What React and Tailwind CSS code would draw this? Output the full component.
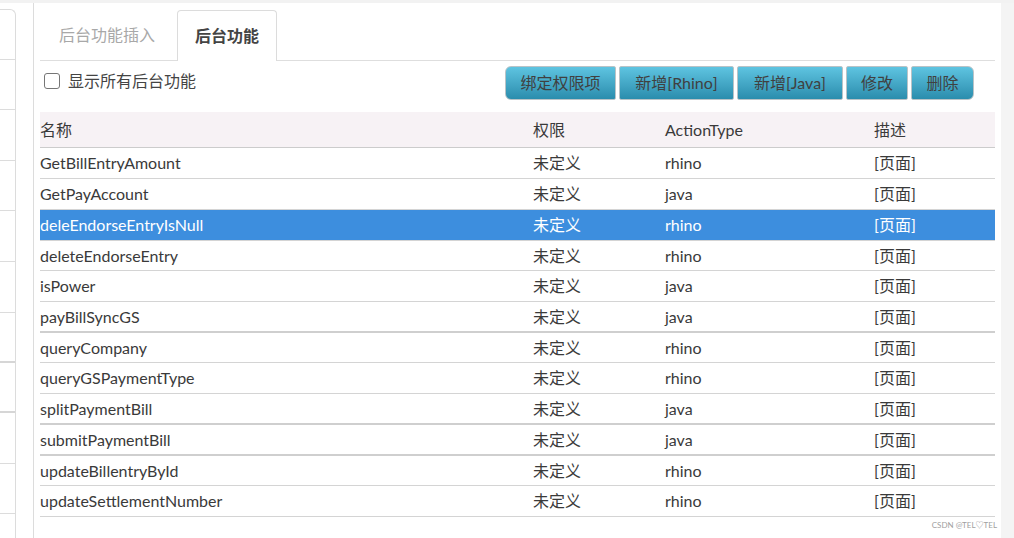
import React from "react";

const rows = [
  ["GetBillEntryAmount", "rhino", "h-[31px]", "border-b border-[#d4d4d4]"],
  ["GetPayAccount", "java", "h-[31px]", "border-b border-[#d4d4d4]"],
  ["deleEndorseEntryIsNull", "rhino", "h-[31px]", "border-b border-[#d4d4d4]", true],
  ["deleteEndorseEntry", "rhino", "h-[30px]", "border-b border-[#d4d4d4]"],
  ["isPower", "java", "h-[31px]", "border-b border-[#d4d4d4]"],
  ["payBillSyncGS", "java", "h-[31px]", "border-b-2 border-[#cfcfcf]"],
  ["queryCompany", "rhino", "h-[30px]", "border-b border-[#d4d4d4]"],
  ["queryGSPaymentType", "rhino", "h-[31px]", "border-b border-[#d4d4d4]"],
  ["splitPaymentBill", "java", "h-[31px]", "border-b-2 border-[#cfcfcf]"],
  ["submitPaymentBill", "java", "h-[31px]", "border-b-2 border-[#cfcfcf]"],
  ["updateBillentryById", "rhino", "h-[30px]", "border-b border-[#d4d4d4]"],
  ["updateSettlementNumber", "rhino", "h-[31px]", "border-b border-[#d4d4d4]"],
];

const leftCells = [
  "h-[50px] border-b border-[#dcdcdc]",
  "h-[50px] border-b border-[#dcdcdc]",
  "h-[51px] border-b border-[#dcdcdc]",
  "h-[50px] border-b border-[#dcdcdc]",
  "h-[51px] border-b border-[#dcdcdc]",
  "h-[51px] border-b border-[#dcdcdc]",
  "h-[50px] border-b-2 border-[#d6d6d6]",
  "h-[50px] border-b-2 border-[#d6d6d6]",
  "h-[51px] border-b border-[#dcdcdc]",
  "h-[50px] border-b border-[#dcdcdc]",
];

const btnBase =
  "h-[34px] flex items-center justify-center border border-[#b9c3c7] bg-gradient-to-b from-[#5ec4e1] to-[#2a8dad] text-[#404040] text-[16px]";

export default function App() {
  return (
    <div
      className="w-[1014px] h-[538px] bg-white flex flex-col overflow-hidden"
      style={{ fontFamily: 'Lato, "Noto Sans CJK SC", sans-serif' }}
    >
      <div className="h-[3px] bg-[#f2f2f2] shrink-0" />
      <div className="flex flex-1 min-h-0">
        {/* left side panel */}
        <div className="w-[16px] shrink-0 pt-[6px]">
          <div className="h-full border-r border-t border-[#dcdcdc] rounded-tr-[6px] flex flex-col">
            {leftCells.map((c, i) => (
              <div key={i} className={c} />
            ))}
          </div>
        </div>
        <div className="w-[17px] shrink-0" />
        {/* main */}
        <div className="flex-1 border-l border-[#dcdcdc] px-[6px] relative">
          {/* tabs */}
          <div className="flex items-end h-[58px] border-b border-[#dedede]">
            <div className="h-[50px] w-[137px] pr-[3px] flex items-center justify-center text-[16px] text-[#a8a8a8]">
              后台功能插入
            </div>
            <div className="h-[51px] w-[100px] -mb-px bg-white border border-b-0 border-[#dcdcdc] rounded-t-[4px] flex items-center justify-center text-[16px] font-bold text-[#444]">
              后台功能
            </div>
          </div>
          {/* toolbar */}
          <div className="h-[51px] flex items-start justify-between pr-[21px]">
            <label className="flex items-center mt-[8px] ml-[4px] gap-[8px] text-[16px] text-[#444]">
              <span className="w-[16px] h-[16px] border border-[#767676] rounded-[3px] bg-white" />
              显示所有后台功能
            </label>
            <div className="flex gap-[3px] mt-[5px]">
              <div className={`${btnBase} w-[111px] rounded-l-[6px] rounded-r-[2px]`}>绑定权限项</div>
              <div className={`${btnBase} w-[115px] rounded-[2px]`}>新增[Rhino]</div>
              <div className={`${btnBase} w-[106px] rounded-[2px]`}>新增[Java]</div>
              <div className={`${btnBase} w-[62px] rounded-[2px]`}>修改</div>
              <div className={`${btnBase} w-[63px] rounded-r-[6px] rounded-l-[2px]`}>删除</div>
            </div>
          </div>
          {/* table */}
          <div className="text-[16px] text-[#3a3a3a]">
            <div className="grid grid-cols-[493px_132px_209px_1fr] h-[36px] items-center bg-[#f7f2f5] border-b border-[#cccccc]">
              <div>名称</div>
              <div>权限</div>
              <div>ActionType</div>
              <div>描述</div>
            </div>
            {rows.map(([name, type, h, b, sel]) => (
              <div
                key={name}
                className={`grid grid-cols-[493px_132px_209px_1fr] items-center ${h} ${b} ${
                  sel ? "bg-[#3d8ede] text-white" : ""
                }`}
              >
                <div>{name}</div>
                <div>未定义</div>
                <div>{type}</div>
                <div>[页面]</div>
              </div>
            ))}
          </div>
          <div className="absolute right-[4px] bottom-[9px] text-[8px] text-[#a0a0a0] leading-none">
            CSDN @TEL♡TEL
          </div>
        </div>
        <div className="w-[13px] shrink-0 bg-[#f4f4f4]" />
      </div>
    </div>
  );
}
